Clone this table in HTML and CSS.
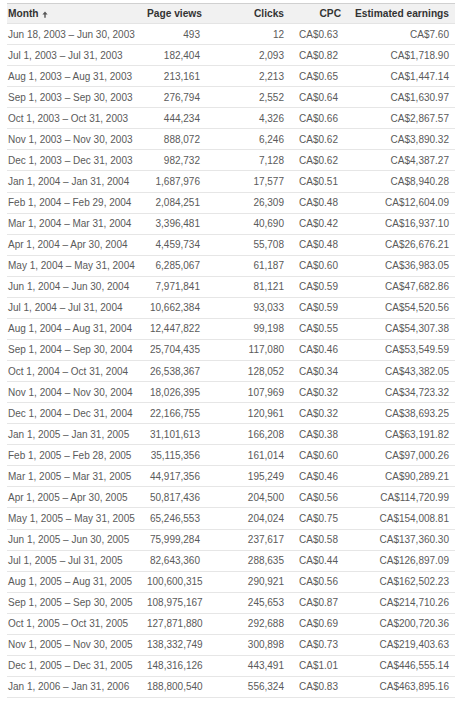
FILE: index.html
```html
<!DOCTYPE html>
<html>
<head>
<meta charset="utf-8">
<link rel="stylesheet" href="styles.css">
</head>
<body>
<table class="report">
<colgroup>
<col class="c-month"><col class="c-views"><col class="c-clicks"><col class="c-cpc"><col class="c-earn">
</colgroup>
<thead>
<tr>
<th class="left">Month <svg class="arrow" width="6" height="7" viewBox="0 0 6 7"><path d="M3 0.5 L5.6 3.4 H3.7 V6.8 H2.3 V3.4 H0.4 Z" fill="#555"/></svg></th>
<th>Page views</th>
<th>Clicks</th>
<th>CPC</th>
<th>Estimated earnings</th>
</tr>
</thead>
<tbody>
<tr><td class="left">Jun 18, 2003 – Jun 30, 2003</td><td>493</td><td>12</td><td class="cpc">CA$0.63</td><td>CA$7.60</td></tr>
<tr><td class="left">Jul 1, 2003 – Jul 31, 2003</td><td>182,404</td><td>2,093</td><td class="cpc">CA$0.82</td><td>CA$1,718.90</td></tr>
<tr><td class="left">Aug 1, 2003 – Aug 31, 2003</td><td>213,161</td><td>2,213</td><td class="cpc">CA$0.65</td><td>CA$1,447.14</td></tr>
<tr><td class="left">Sep 1, 2003 – Sep 30, 2003</td><td>276,794</td><td>2,552</td><td class="cpc">CA$0.64</td><td>CA$1,630.97</td></tr>
<tr><td class="left">Oct 1, 2003 – Oct 31, 2003</td><td>444,234</td><td>4,326</td><td class="cpc">CA$0.66</td><td>CA$2,867.57</td></tr>
<tr><td class="left">Nov 1, 2003 – Nov 30, 2003</td><td>888,072</td><td>6,246</td><td class="cpc">CA$0.62</td><td>CA$3,890.32</td></tr>
<tr><td class="left">Dec 1, 2003 – Dec 31, 2003</td><td>982,732</td><td>7,128</td><td class="cpc">CA$0.62</td><td>CA$4,387.27</td></tr>
<tr><td class="left">Jan 1, 2004 – Jan 31, 2004</td><td>1,687,976</td><td>17,577</td><td class="cpc">CA$0.51</td><td>CA$8,940.28</td></tr>
<tr><td class="left">Feb 1, 2004 – Feb 29, 2004</td><td>2,084,251</td><td>26,309</td><td class="cpc">CA$0.48</td><td>CA$12,604.09</td></tr>
<tr><td class="left">Mar 1, 2004 – Mar 31, 2004</td><td>3,396,481</td><td>40,690</td><td class="cpc">CA$0.42</td><td>CA$16,937.10</td></tr>
<tr><td class="left">Apr 1, 2004 – Apr 30, 2004</td><td>4,459,734</td><td>55,708</td><td class="cpc">CA$0.48</td><td>CA$26,676.21</td></tr>
<tr><td class="left">May 1, 2004 – May 31, 2004</td><td>6,285,067</td><td>61,187</td><td class="cpc">CA$0.60</td><td>CA$36,983.05</td></tr>
<tr><td class="left">Jun 1, 2004 – Jun 30, 2004</td><td>7,971,841</td><td>81,121</td><td class="cpc">CA$0.59</td><td>CA$47,682.86</td></tr>
<tr><td class="left">Jul 1, 2004 – Jul 31, 2004</td><td>10,662,384</td><td>93,033</td><td class="cpc">CA$0.59</td><td>CA$54,520.56</td></tr>
<tr><td class="left">Aug 1, 2004 – Aug 31, 2004</td><td>12,447,822</td><td>99,198</td><td class="cpc">CA$0.55</td><td>CA$54,307.38</td></tr>
<tr><td class="left">Sep 1, 2004 – Sep 30, 2004</td><td>25,704,435</td><td>117,080</td><td class="cpc">CA$0.46</td><td>CA$53,549.59</td></tr>
<tr><td class="left">Oct 1, 2004 – Oct 31, 2004</td><td>26,538,367</td><td>128,052</td><td class="cpc">CA$0.34</td><td>CA$43,382.05</td></tr>
<tr><td class="left">Nov 1, 2004 – Nov 30, 2004</td><td>18,026,395</td><td>107,969</td><td class="cpc">CA$0.32</td><td>CA$34,723.32</td></tr>
<tr><td class="left">Dec 1, 2004 – Dec 31, 2004</td><td>22,166,755</td><td>120,961</td><td class="cpc">CA$0.32</td><td>CA$38,693.25</td></tr>
<tr><td class="left">Jan 1, 2005 – Jan 31, 2005</td><td>31,101,613</td><td>166,208</td><td class="cpc">CA$0.38</td><td>CA$63,191.82</td></tr>
<tr><td class="left">Feb 1, 2005 – Feb 28, 2005</td><td>35,115,356</td><td>161,014</td><td class="cpc">CA$0.60</td><td>CA$97,000.26</td></tr>
<tr><td class="left">Mar 1, 2005 – Mar 31, 2005</td><td>44,917,356</td><td>195,249</td><td class="cpc">CA$0.46</td><td>CA$90,289.21</td></tr>
<tr><td class="left">Apr 1, 2005 – Apr 30, 2005</td><td>50,817,436</td><td>204,500</td><td class="cpc">CA$0.56</td><td>CA$114,720.99</td></tr>
<tr><td class="left">May 1, 2005 – May 31, 2005</td><td>65,246,553</td><td>204,024</td><td class="cpc">CA$0.75</td><td>CA$154,008.81</td></tr>
<tr><td class="left">Jun 1, 2005 – Jun 30, 2005</td><td>75,999,284</td><td>237,617</td><td class="cpc">CA$0.58</td><td>CA$137,360.30</td></tr>
<tr><td class="left">Jul 1, 2005 – Jul 31, 2005</td><td>82,643,360</td><td>288,635</td><td class="cpc">CA$0.44</td><td>CA$126,897.09</td></tr>
<tr><td class="left">Aug 1, 2005 – Aug 31, 2005</td><td>100,600,315</td><td>290,921</td><td class="cpc">CA$0.56</td><td>CA$162,502.23</td></tr>
<tr><td class="left">Sep 1, 2005 – Sep 30, 2005</td><td>108,975,167</td><td>245,653</td><td class="cpc">CA$0.87</td><td>CA$214,710.26</td></tr>
<tr><td class="left">Oct 1, 2005 – Oct 31, 2005</td><td>127,871,880</td><td>292,688</td><td class="cpc">CA$0.69</td><td>CA$200,720.36</td></tr>
<tr><td class="left">Nov 1, 2005 – Nov 30, 2005</td><td>138,332,749</td><td>300,898</td><td class="cpc">CA$0.73</td><td>CA$219,403.63</td></tr>
<tr><td class="left">Dec 1, 2005 – Dec 31, 2005</td><td>148,316,126</td><td>443,491</td><td class="cpc">CA$1.01</td><td>CA$446,555.14</td></tr>
<tr><td class="left">Jan 1, 2006 – Jan 31, 2006</td><td>188,800,540</td><td>556,324</td><td class="cpc">CA$0.83</td><td>CA$463,895.16</td></tr>
</tbody>
</table>
</body>
</html>
```
FILE: styles.css
```css
html, body {
  margin: 0;
  padding: 0;
  background: #fff;
}
body {
  padding: 3px 0 0 7px;
  font-family: "Liberation Sans", Arial, sans-serif;
  font-size: 10px;
  color: #5a5a5a;
}
.report {
  border-collapse: collapse;
  table-layout: fixed;
  width: 448px;
}
.c-month { width: 140px; }
.c-views { width: 59px; }
.c-clicks { width: 84px; }
.c-cpc { width: 57px; }
.c-earn { width: 108px; }
.report thead tr {
  background: #f1f1f1;
  border-top: 1px solid #d0d0d0;
  border-bottom: 1px solid #e4e4e4;
}
.report th {
  height: 19px;
  padding: 0 6px 0 0;
  font-weight: bold;
  color: #333;
  text-align: right;
  white-space: nowrap;
  font-size: 10.2px;
}
.report td {
  height: 20.07px;
  padding: 0 6px 0 0;
  text-align: right;
  white-space: nowrap;
  border-bottom: 1px solid #e6e6e6;
}
.report .left {
  text-align: left;
  padding-left: 1px;
}
.report td.cpc {
  padding-right: 9px;
}
.arrow {
  vertical-align: -1px;
  margin-left: 1px;
}
```
